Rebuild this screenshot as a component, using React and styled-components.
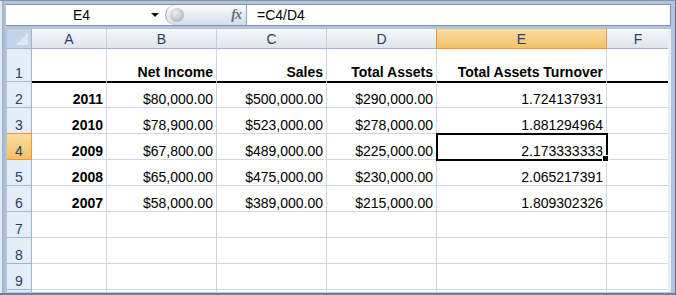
import React from 'react';
import styled, { createGlobalStyle, css } from 'styled-components';

const GlobalStyle = createGlobalStyle`
  html, body {
    margin: 0;
    padding: 0;
    background: #ffffff;
    overflow: hidden;
  }
  * {
    box-sizing: border-box;
  }
`;

const COLUMNS = ['A', 'B', 'C', 'D', 'E', 'F'];
const WIDTHS = [25, 75, 110, 110, 110, 170, 63];

const data = [
  ['2011', '$80,000.00', '$500,000.00', '$290,000.00', '1.724137931'],
  ['2010', '$78,900.00', '$523,000.00', '$278,000.00', '1.881294964'],
  ['2009', '$67,800.00', '$489,000.00', '$225,000.00', '2.173333333'],
  ['2008', '$65,000.00', '$475,000.00', '$230,000.00', '2.065217391'],
  ['2007', '$58,000.00', '$389,000.00', '$215,000.00', '1.809302326'],
];

const headers = ['', 'Net Income', 'Sales', 'Total Assets', 'Total Assets Turnover', ''];

const App = () => {
  const rows = [];
  // header row 1
  rows.push(
    <React.Fragment key="r1">
      <RowHead>1</RowHead>
      {headers.map((h, i) => (
        <Cell key={i} bold underline>{h}</Cell>
      ))}
    </React.Fragment>
  );
  data.map((r, ri) => {
    const rowNo = ri + 2;
    rows.push(
      <React.Fragment key={rowNo}>
        <RowHead active={rowNo === 4}>{rowNo}</RowHead>
        {r.map((v, ci) => (
          <Cell key={ci} bold={ci === 0} selected={rowNo === 4 && ci === 4}>
            {v}
            {rowNo === 4 && ci === 4 && <FillHandle />}
          </Cell>
        ))}
        <Cell />
      </React.Fragment>
    );
  });
  // empty rows, the last one only peeks out under the frame
  [7, 8, 9, ''].map((n, i) => {
    rows.push(
      <React.Fragment key={'e' + i}>
        <RowHead>{n}</RowHead>
        {COLUMNS.map(c => <Cell key={c} />)}
      </React.Fragment>
    );
  });

  return (
    <Window>
      <GlobalStyle />
      <FormulaBar>
        <NameBox>
          <NameText>E4</NameText>
          <DropArrow />
        </NameBox>
        <FxPill>
          <Knob />
          <Fx>fx</Fx>
        </FxPill>
        <Formula>=C4/D4</Formula>
      </FormulaBar>
      <Sheet>
        <Grid>
          <Corner>
            <svg width="12" height="12" viewBox="0 0 12 12">
              <polygon points="12,0 12,12 0,12" fill="#dfe7f2" />
            </svg>
          </Corner>
          {COLUMNS.map(c => (
            <ColHead key={c} active={c === 'E'}>{c}</ColHead>
          ))}
          {rows}
        </Grid>
      </Sheet>
    </Window>
  );
};

const Window = styled.div`
  width: 676px;
  height: 295px;
  display: flex;
  flex-direction: column;
  padding: 3px 4px 1px 7px;
  background: linear-gradient(90deg, #e3e9f1 0px, #e3e9f1 2px, #9fb3cd 2px, #b3c4da 6px);
  border-top: 1px solid #8094b0;
  border-bottom: 2px solid #6d819c;
  border-right: 1px solid #5f7593;
  overflow: hidden;
  font-family: 'Liberation Sans', Arial, sans-serif;
`;

const FormulaBar = styled.div`
  display: flex;
  align-items: stretch;
  height: 22px;
  background: #ffffff;
  border-top: 1px solid #7f93ae;
  border-bottom: 1px solid #7f93ae;
  margin-left: -1px;
  flex-shrink: 0;
`;

const NameBox = styled.div`
  width: 159px;
  display: flex;
  align-items: center;
  padding-right: 6px;
`;

const NameText = styled.div`
  flex: 1;
  text-align: center;
  font-size: 14px;
  color: #000;
  padding-left: 6px;
`;

const DropArrow = styled.div`
  width: 0;
  height: 0;
  border-left: 4px solid transparent;
  border-right: 4px solid transparent;
  border-top: 4px solid #111;
`;

const FxPill = styled.div`
  width: 82px;
  display: flex;
  align-items: center;
  justify-content: space-between;
  padding: 0 5px 0 4px;
  border: 1px solid #8fa4be;
  border-top: none;
  border-bottom: none;
  border-radius: 10px 0 0 10px;
  background: linear-gradient(180deg, #fbfcfe 0%, #e6ecf4 50%, #d2dcea 100%);
`;

const Knob = styled.div`
  width: 14px;
  height: 14px;
  border-radius: 50%;
  background: radial-gradient(circle at 40% 35%, #eeeeee 0%, #bfc3c9 60%, #9fa4ac 100%);
`;

const Fx = styled.div`
  font-family: 'Liberation Serif', 'Times New Roman', serif;
  font-style: italic;
  font-weight: bold;
  font-size: 14px;
  color: #6a6f78;
  letter-spacing: -1px;
`;

const Formula = styled.div`
  display: flex;
  align-items: center;
  padding-left: 10px;
  font-size: 14px;
  color: #000;
  flex: 1;
  border-right: 1px solid #7f93ae;
`;

const Sheet = styled.div`
  margin-top: 3px;
  flex: 1;
  overflow: hidden;
  background: #ffffff;
  border-right: 3px solid #e9eef5;
`;

const Grid = styled.div`
  display: grid;
  grid-template-columns: ${WIDTHS.map(w => w + 'px').join(' ')};
  grid-template-rows: 20px 33px repeat(9, 26px);
`;

const activeBg = css`
  background: linear-gradient(180deg, #f9dba1 0%, #f6cf86 50%, #f2c165 100%);
  border-color: #f29536;
`;

const Corner = styled.div`
  background: #c2d4ea;
  border-right: 1px solid #9eb6ce;
  border-bottom: 1px solid #9eb6ce;
  display: flex;
  align-items: flex-end;
  justify-content: flex-end;
  padding: 0 3px 3px 0;
`;

const ColHead = styled.div`
  background: linear-gradient(180deg, #f6f8fb 0%, #eaeef4 50%, #dfe4ec 100%);
  color: #27415f;
  font-size: 14px;
  display: flex;
  align-items: center;
  justify-content: center;
  border-right: 1px solid #c5d0dd;
  border-bottom: 1px solid #9eb6ce;
  padding-top: 1px;
  ${p => p.active && css`
    ${activeBg}
    border-left: 1px solid #f29536;
    border-right: 1px solid #f29536;
    border-bottom: 1px solid #f29536;
    margin-left: -1px;
  `}
`;

const RowHead = styled.div`
  background: #e4ecf7;
  color: #27415f;
  font-size: 14px;
  display: flex;
  align-items: flex-end;
  justify-content: center;
  padding-bottom: 0;
  border-right: 1px solid #9eb6ce;
  border-bottom: 1px solid #9eb6ce;
  ${p => p.active && css`
    ${activeBg}
    border-top: 1px solid #f29536;
    border-right: 1px solid #f29536;
    border-bottom: 1px solid #f29536;
    margin-top: -1px;
  `}
`;

const Cell = styled.div`
  position: relative;
  display: flex;
  align-items: flex-end;
  justify-content: flex-end;
  padding: 0 3px 0 2px;
  font-size: 14px;
  font-weight: ${p => (p.bold ? 'bold' : 'normal')};
  color: #000;
  white-space: nowrap;
  border-right: 1px solid #d0d7e5;
  border-bottom: ${p => (p.underline ? '2px solid #000' : '1px solid #d0d7e5')};
  ${p => p.underline && css`
    margin-bottom: -1px;
    padding-bottom: 1px;
  `}
  ${p => p.selected && css`
    outline: 2px solid #000;
    outline-offset: -1px;
    z-index: 2;
  `}
`;

const FillHandle = styled.span`
  position: absolute;
  right: -3px;
  bottom: -3px;
  width: 5px;
  height: 5px;
  background: #000;
  border: 1px solid #fff;
  box-sizing: content-box;
`;

export default App;
